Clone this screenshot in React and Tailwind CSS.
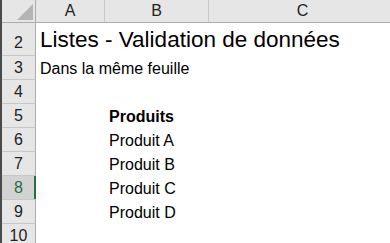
import React from 'react';

const ROWS = [
  { n: 2, h: 'h-[33px]', pb: 'pb-[3px]' },
  { n: 3, h: 'h-[24px]', pb: 'pb-[2px]' },
  { n: 4, h: 'h-[24px]', pb: 'pb-[2px]' },
  { n: 5, h: 'h-[24px]', pb: 'pb-[2px]', b: 'Produits', bold: true },
  { n: 6, h: 'h-[24px]', pb: 'pb-[2px]', b: 'Produit A' },
  { n: 7, h: 'h-[24px]', pb: 'pb-[2px]', b: 'Produit B' },
  { n: 8, h: 'h-[24px]', pb: 'pb-[2px]', b: 'Produit C', active: true },
  { n: 9, h: 'h-[24px]', pb: 'pb-[2px]', b: 'Produit D' },
  { n: 10, h: 'h-[24px]', pb: 'pb-[2px]' },
];

function RowHeader({ row }) {
  return (
    <div
      className={
        'relative flex w-[34px] shrink-0 items-end justify-center border-b border-r border-b-[#c8c8c8] border-r-[#ababab] ' +
        row.pb +
        (row.active ? ' bg-[#d2d2d2] text-[#217346]' : ' bg-[#e6e6e6] text-[#222]')
      }
    >
      <span className="leading-[18px]">{row.n}</span>
      {row.active && <div className="absolute right-[-1px] top-0 h-full w-[2px] bg-[#217346]" />}
    </div>
  );
}

export default function App() {
  return (
    <div
      className="flex h-[243px] w-[390px] overflow-hidden bg-white text-[16px] text-black"
      style={{ fontFamily: '"Liberation Sans", Arial, sans-serif' }}
    >
      <div className="w-[2px] shrink-0 bg-[#4a4a4a]" />
      <div className="flex min-w-0 flex-1 flex-col">
        {/* column headers */}
        <div className="flex h-[23px] shrink-0 bg-[#e6e6e6] text-[#222]">
          <div className="flex w-[34px] shrink-0 items-end justify-end border-b border-r border-[#ababab] pb-[2px] pr-[2px]">
            <svg width="16" height="16" viewBox="0 0 16 16">
              <polygon points="16,0 16,16 0,16" fill="#b4b4b4" />
            </svg>
          </div>
          <div className="flex w-[69px] shrink-0 items-center justify-center border-b border-r border-b-[#ababab] border-r-[#c8c8c8] leading-[18px]">A</div>
          <div className="flex w-[104px] shrink-0 items-center justify-center border-b border-r border-b-[#ababab] border-r-[#c8c8c8] leading-[18px]">B</div>
          <div className="flex w-[188px] shrink-0 items-center justify-center border-b border-r border-b-[#ababab] border-r-[#c8c8c8] leading-[18px]">C</div>
        </div>

        {ROWS.map((row) => (
          <div key={row.n} className={'flex shrink-0 ' + row.h}>
            <RowHeader row={row} />
            <div className={'flex w-[69px] shrink-0 items-end whitespace-nowrap pl-[4px] ' + row.pb}>
              {row.n === 2 && <span className="text-[22.5px] leading-[26px]">Listes - Validation de données</span>}
              {row.n === 3 && <span className="leading-[18px]">Dans la même feuille</span>}
            </div>
            <div className={'flex w-[104px] shrink-0 items-end whitespace-nowrap pl-[4px] ' + row.pb}>
              {row.b && <span className={'leading-[18px]' + (row.bold ? ' font-bold' : '')}>{row.b}</span>}
            </div>
          </div>
        ))}
      </div>
    </div>
  );
}
